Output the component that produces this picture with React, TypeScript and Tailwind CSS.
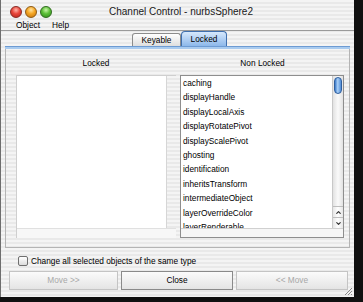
import { ChevronUp, ChevronDown } from "lucide-react";

const STRIPES =
  "bg-[repeating-linear-gradient(180deg,#f4f4f4_0px,#f4f4f4_2px,#e9e9e9_2px,#e9e9e9_4px)]";

const NON_LOCKED = [
  "caching",
  "displayHandle",
  "displayLocalAxis",
  "displayRotatePivot",
  "displayScalePivot",
  "ghosting",
  "identification",
  "inheritsTransform",
  "intermediateObject",
  "layerOverrideColor",
  "layerRenderable",
];

function TrafficLights() {
  return (
    <div className="flex items-center gap-[3px] pl-[9px]">
      <span className="w-[12px] h-[12px] rounded-full border border-[#8a2a24] bg-[radial-gradient(circle_at_50%_30%,#ffb3a8_0%,#e8463b_45%,#b3231a_100%)]" />
      <span className="w-[12px] h-[12px] rounded-full border border-[#8f5a12] bg-[radial-gradient(circle_at_50%_30%,#ffe3a0_0%,#f5a623_45%,#c0700e_100%)]" />
      <span className="w-[12px] h-[12px] rounded-full border border-[#2f6b1e] bg-[radial-gradient(circle_at_50%_30%,#c9f5a8_0%,#5cbf38_45%,#2f8a1a_100%)]" />
    </div>
  );
}

function Button({ label, enabled }: { label: string; enabled?: boolean }) {
  return (
    <div
      className={
        "h-[19px] flex items-center justify-center border bg-[linear-gradient(180deg,#fbfbfb,#e4e4e4)] " +
        (enabled
          ? "border-[#8a8a8a] text-black"
          : "border-[#c4c4c4] text-[#a8a8a8]")
      }
    >
      {label}
    </div>
  );
}

export default function App() {
  return (
    <div className="w-[363px] h-[302px] bg-[#101010] font-['Liberation_Sans',Arial,sans-serif] text-[8.3px] leading-none text-black">
      <div
        className={`relative w-[354px] h-[297px] flex flex-col border-l border-[#6e6e6e] ${STRIPES}`}
      >
        {/* Title bar */}
        <div className="h-[20px] grid grid-cols-[55px_1fr_48px] items-center pt-[4px]">
          <TrafficLights />
          <p className="text-center text-[10px] text-[#1a1a1a]">
            Channel Control - nurbsSphere2
          </p>
          <div />
        </div>

        {/* Menu bar */}
        <div className="h-[11px] flex items-center gap-[12px] pl-[15px] pt-[1px] border-b border-[#9a9a9a]">
          <span>Object</span>
          <span>Help</span>
        </div>

        {/* Tabs */}
        <div className="h-[15px] flex items-end pl-[131px]">
          <div className="h-[13px] w-[49px] flex items-center justify-center rounded-t-[3px] border border-b-0 border-[#8c8c8c] bg-[linear-gradient(180deg,#ffffff,#dedede)]">
            Keyable
          </div>
          <div className="h-[15px] w-[46px] flex items-center justify-center rounded-t-[4px] border border-b-0 border-[#3f6fae] bg-[linear-gradient(180deg,#d6e8fc,#8db8ea)]">
            Locked
          </div>
        </div>
        <div className="h-[3px] mx-[4px] border-t border-[#6d9bd3] bg-[#a9cbef]" />

        {/* Tab panel */}
        <div className="h-[199px] mx-[4px] flex flex-col border-l border-r border-b border-[#b4b4b4]">
          <div className="h-[26px] grid grid-cols-[160px_163px] gap-[5px] pl-[10px] items-center">
            <p className="text-center pt-[2px]">Locked</p>
            <p className="text-center pt-[2px]">Non Locked</p>
          </div>
          <div className="grid grid-cols-[160px_164px] gap-[4px] pl-[10px]">
            {/* Locked list (empty) */}
            <div className="h-[163px] flex flex-col border-l border-t border-[#cfcfcf] bg-white">
              <div className="flex-1 flex">
                <div className="flex-1" />
                <div className={`w-[10px] border-l border-[#d6d6d6] ${STRIPES}`} />
              </div>
              <div className="h-[10px] border-t border-[#e0e0e0] bg-[#f7f7f7]" />
            </div>

            {/* Non locked list */}
            <div className="h-[163px] flex flex-col border border-[#8e8e8e] bg-white">
              <div className="h-[152px] flex">
                <ul className="flex-1 overflow-hidden pl-[2px]">
                  {NON_LOCKED.map((item) => (
                    <li key={item} className="h-[14.4px] flex items-center">
                      {item}
                    </li>
                  ))}
                </ul>
                <div className="w-[11px] flex flex-col border-l border-[#c8c8c8] bg-[linear-gradient(90deg,#e2e2e2,#fafafa_50%,#e2e2e2)]">
                  <div className="mx-[1px] mt-[1px] h-[17px] rounded-full border border-[#2f5f9e] bg-[linear-gradient(90deg,#3a78c9,#a9d0f7_45%,#4f8bd6)]" />
                  <div className="flex-1" />
                  <div className="h-[11px] flex items-center justify-center border-t border-[#bdbdbd] bg-[linear-gradient(90deg,#e6e6e6,#ffffff,#e6e6e6)]">
                    <ChevronUp size={7} strokeWidth={4} className="text-[#333]" />
                  </div>
                  <div className="h-[11px] flex items-center justify-center border-t border-[#bdbdbd] bg-[linear-gradient(90deg,#e6e6e6,#ffffff,#e6e6e6)]">
                    <ChevronDown size={7} strokeWidth={4} className="text-[#333]" />
                  </div>
                </div>
              </div>
              <div className="flex-1 border-t border-[#d0d0d0] bg-[#f6f6f6]" />
            </div>
          </div>
        </div>

        {/* Checkbox row */}
        <div className="h-[22px] flex items-center gap-[3px] pl-[17px] pt-[4px]">
          <span className="w-[10px] h-[10px] rounded-[2px] border border-[#6f6f6f] bg-[linear-gradient(180deg,#ffffff,#dcdcdc)]" />
          <span>Change all selected objects of the same type</span>
        </div>

        {/* Buttons */}
        <div className="grid grid-cols-[109px_112px_112px] gap-[3px] pl-[8px] pt-[1px]">
          <Button label="Move >>" />
          <Button label="Close" enabled />
          <Button label="<< Move" />
        </div>

        {/* Resize grip */}
        <svg
          className="absolute right-[1px] bottom-[1px]"
          width="9"
          height="9"
          viewBox="0 0 9 9"
        >
          <path d="M8 1 L1 8 M8 4 L4 8 M8 7 L7 8" stroke="#8a8a8a" strokeWidth="1" />
        </svg>
      </div>
    </div>
  );
}
